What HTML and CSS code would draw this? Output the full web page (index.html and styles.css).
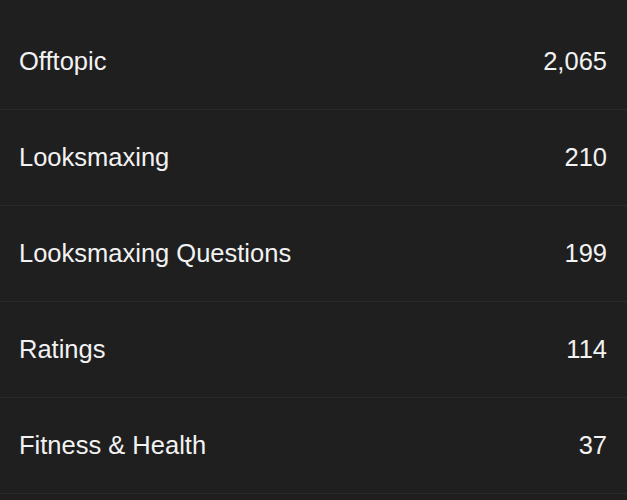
FILE: index.html
```html
<!DOCTYPE html>
<html>
<head>
<meta charset="utf-8">
<link rel="stylesheet" href="styles.css">
</head>
<body>
<ul class="list">
  <li class="row"><span class="name">Offtopic</span><span class="count">2,065</span></li>
  <li class="row"><span class="name">Looksmaxing</span><span class="count">210</span></li>
  <li class="row"><span class="name">Looksmaxing Questions</span><span class="count">199</span></li>
  <li class="row"><span class="name">Ratings</span><span class="count">114</span></li>
  <li class="row"><span class="name">Fitness &amp; Health</span><span class="count">37</span></li>
</ul>
</body>
</html>
```
FILE: styles.css
```css
html, body {
  margin: 0;
  padding: 0;
  background: #1f1f1f;
  height: 100%;
  overflow: hidden;
}
.list {
  list-style: none;
  margin: 0;
  padding: 14px 0 0 0;
  font-family: "Liberation Sans", Arial, sans-serif;
  font-size: 25.5px;
  color: #f2f2f2;
}
.row {
  height: 95px;
  border-bottom: 1px solid #2a2a2a;
  display: flex;
  align-items: center;
  justify-content: space-between;
  padding: 0 20px 0 19px;
}
```
